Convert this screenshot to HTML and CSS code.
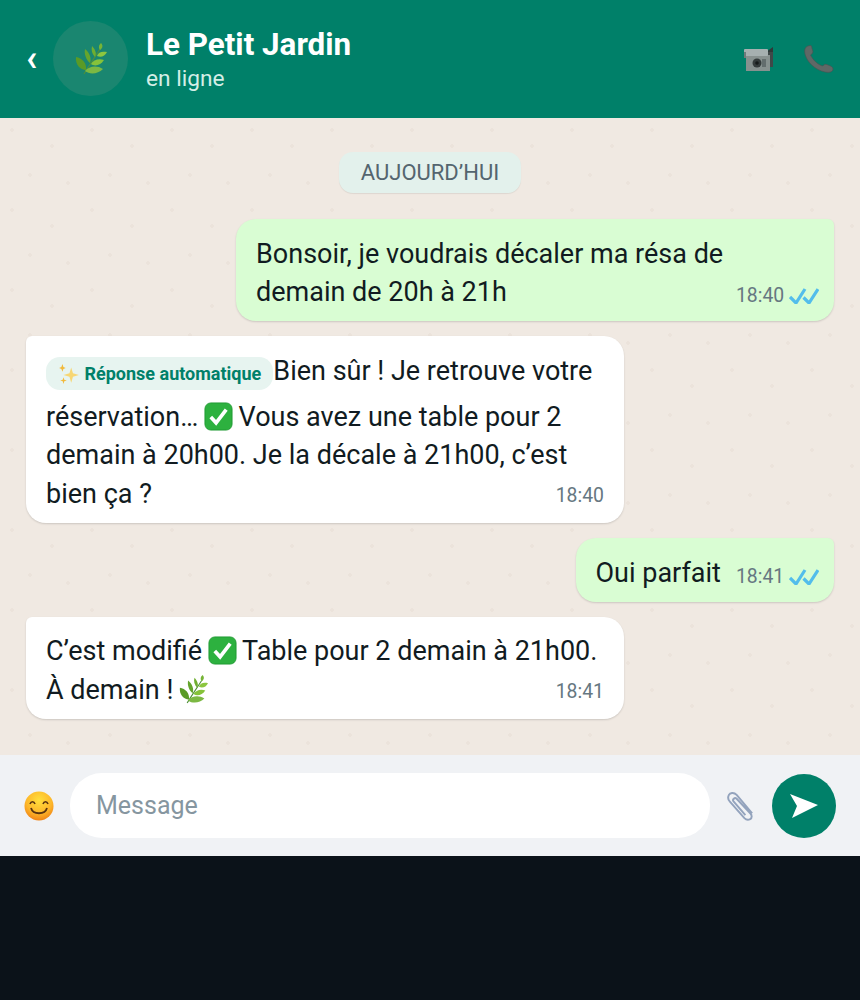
FILE: index.html
```html
<!DOCTYPE html>
<html lang="fr">
<head>
  <meta charset="UTF-8">
  <meta name="viewport" content="width=device-width, initial-scale=1.0">
  <title>Le Petit Jardin</title>
  <link rel="stylesheet" href="styles.css">
</head>
<body>
  <!-- emojis -->
  <svg class="defs" width="0" height="0">
    <symbol id="leaf" viewBox="0 0 32 32">
      <path d="M9 31C13 24 18 17 25 6" fill="none" stroke="#4f8f3a" stroke-width="1.2"/>
      <path d="M11 27C5 27 0 21 1 14c6 1 11 6 10 13z" fill="#5a9a26"/>
      <path d="M10 28c4-5 12-6 18-2-5 5-13 6-18 2z" fill="#7cb843"/>
      <path d="M15 20c-4-3-6-9-5-14 4 3 7 9 5 14z" fill="#64a52c"/>
      <path d="M16 21c2-4 8-6 13-4-3 5-9 7-13 4z" fill="#86c23a"/>
      <path d="M20 14c-3-3-4-7-3-11 3 3 5 7 3 11z" fill="#6fae30"/>
      <path d="M22 13c1-4 5-5 10-4-2 4-6 6-10 4z" fill="#8cc63f"/>
      <path d="M25 7c-2-3-1-5 1-7 2 2 2 5-1 7z" fill="#76b436"/>
    </symbol>
    <symbol id="check" viewBox="0 0 30 30">
      <rect x="1" y="1" width="28" height="28" rx="6" fill="#2db13f" stroke="#1f9a33" stroke-width="1"/>
      <path d="M7 15.500l5.500 6L23 8" fill="none" stroke="#fff" stroke-width="3.800"/>
    </symbol>
    <symbol id="ticks" viewBox="0 0 30 16">
      <path d="M1 9l6 6L16 1M14.500 9.500L20 15l9-14" fill="none" stroke="#53bdeb" stroke-width="3.200"/>
    </symbol>
  </svg>

  <div class="app">
    <!-- entete -->
    <header class="topbar">
      <span class="back">‹</span>
      <div class="avatar"><svg class="avatar-leaf"><use href="#leaf"/></svg></div>
      <div class="contact">
        <div class="contact-name">Le Petit Jardin</div>
        <div class="contact-status">en ligne</div>
      </div>
      <div class="top-icons">
        <svg class="icon-camera" viewBox="0 0 30 26">
          <path d="M22 6l7-5v8z" fill="#2f3838"/>
          <rect x="24" y="6" width="5" height="15" fill="#3f4848"/>
          <rect x="2" y="9" width="24" height="16" fill="#87918f"/>
          <rect x="0" y="3" width="24" height="7" rx="1" fill="#a6b0b0"/>
          <rect x="0" y="6" width="2" height="6" fill="#6f7a7a"/>
          <circle cx="13" cy="17" r="4.500" fill="#343b3b"/>
          <circle cx="13" cy="17" r="1.800" fill="#161a1a"/>
          <rect x="18" y="13" width="4" height="8" fill="#636d6d"/>
        </svg>
        <svg class="icon-phone" viewBox="0 0 30 28">
          <path d="M4 1C1 2 0 5 1 9c2 8 10 16 20 18 4 1 8 0 8-3 0-2-2-3-5-4-2-1-4-1-5 1-5-1-10-6-12.500-11 2-1 3-3 2-5S8 1 7 .6C6 .3 5 .6 4 1z" fill="#5f6866" stroke="#4a5251" stroke-width=".6"/>
        </svg>
      </div>
    </header>

    <!-- messages -->
    <main class="chat">
      <div class="date-pill">AUJOURD’HUI</div>

      <div class="bubble sent">
        Bonsoir, je voudrais décaler ma résa de demain de 20h à 21h
        <span class="meta">18:40 <svg class="ticks"><use href="#ticks"/></svg></span>
      </div>

      <div class="bubble received">
        <span class="auto-tag"><svg class="spark" viewBox="0 0 20 20">
            <path d="M12 4l1.600 5.400L19 11l-5.400 1.600L12 18l-1.600-5.400L5 11l5.400-1.600z" fill="#f7d774"/>
            <path d="M4 1l.9 2.600L7 4.500l-2.100.9L4 8l-.9-2.600L1 4.500l2.100-.9z" fill="#f2b93b"/>
            <path d="M5 13l.7 2.300L8 16l-2.300.7L5 19l-.7-2.300L2 16l2.300-.7z" fill="#f2b93b"/>
          </svg> Réponse automatique</span>Bien sûr ! Je retrouve votre réservation… <svg class="emoji"><use href="#check"/></svg> Vous avez une table pour 2 demain à 20h00. Je la décale à 21h00, c’est bien ça ?
        <span class="meta">18:40</span>
      </div>

      <div class="bubble sent">
        Oui parfait
        <span class="meta">18:41 <svg class="ticks"><use href="#ticks"/></svg></span>
      </div>

      <div class="bubble received">
        C’est modifié <svg class="emoji"><use href="#check"/></svg> Table pour 2 demain à 21h00.
        À demain ! <svg class="emoji"><use href="#leaf"/></svg>
        <span class="meta">18:41</span>
      </div>
    </main>

    <!-- saisie -->
    <footer class="composer">
      <svg class="smile" viewBox="0 0 30 30">
        <defs>
          <radialGradient id="face" cx="50%" cy="30%" r="75%">
            <stop offset="0" stop-color="#ffdf3c"/>
            <stop offset="0.6" stop-color="#fdb62a"/>
            <stop offset="1" stop-color="#ee7a12"/>
          </radialGradient>
        </defs>
        <circle cx="15" cy="15" r="14.500" fill="url(#face)"/>
        <path d="M6 13c1-3 4-3 5 0M19 13c1-3 4-3 5 0" fill="none" stroke="#5a3410" stroke-width="1.600"/>
        <path d="M7 17c2 7 14 7 16 0" fill="none" stroke="#5a3410" stroke-width="1.800"/>
      </svg>
      <div class="message-input">Message</div>
      <svg class="clip" viewBox="0 0 32 32">
        <path d="M27 24L11 5C8 2 4 3 3 5s-1 5 1 7l15 17c2 2 4 2 6 1s2-4 0-6L11 9c-1-1-2-1-3 0s-1 2 0 3l12 14" fill="none" stroke="#93a3bd" stroke-width="2"/>
      </svg>
      <div class="send">
        <svg class="send-arrow" viewBox="0 0 28 24"><path d="M0 0l28 11L2 24l5-12z" fill="#fff"/></svg>
      </div>
    </footer>
  </div>
</body>
</html>
```
FILE: styles.css
```css
body {
  margin: 0;
  height: 1000px;
  background-color: #0b1219;
  font-family: 'Roboto', 'Liberation Sans', sans-serif;
  color: #111b21;
}
.defs {
  position: absolute;
}
.app {
  width: 860px;
}

/* entete */
.topbar {
  height: 118px;
  background-color: #008069;
  display: flex;
  align-items: center;
  padding: 0 26px;
  box-sizing: border-box;
  color: #fff;
}
.back {
  font-size: 36px;
  font-weight: 700;
  line-height: 36px;
  width: 27px;
  margin-top: -2px;
}
.avatar {
  width: 75px;
  height: 75px;
  border-radius: 50%;
  background-color: #1a8670;
  display: flex;
  align-items: center;
  justify-content: center;
  margin-right: 18px;
  margin-top: -1px;
}
.avatar-leaf {
  width: 32px;
  height: 32px;
}
.contact {
  flex: 1;
  padding-top: 4px;
}
.contact-name {
  font-size: 31.400px;
  font-weight: 700;
  line-height: 36px;
}
.contact-status {
  font-size: 22.700px;
  line-height: 32px;
  color: #d4eee6;
}
.top-icons {
  display: flex;
  align-items: center;
  gap: 30px;
}
.icon-camera {
  width: 30px;
  height: 26px;
}
.icon-phone {
  width: 30px;
  height: 28px;
}

/* messages */
.chat {
  height: 637px;
  box-sizing: border-box;
  padding: 34px 26px 0;
  display: flex;
  flex-direction: column;
  align-items: flex-start;
  background-color: #f0e9e2;
  background-image:
    radial-gradient(circle at 12px 12px, #ebe3db 1.500px, transparent 2px),
    radial-gradient(circle at 52px 28px, #ebe3db 1.500px, transparent 2px),
    radial-gradient(circle at 30px 57px, #ebe3db 1.500px, transparent 2px),
    radial-gradient(circle at 68px 65px, #ebe3db 1.500px, transparent 2px);
  background-size: 80px 80px;
}
.date-pill {
  align-self: center;
  background-color: #e3f1ec;
  color: #54656f;
  font-size: 22px;
  line-height: 41px;
  padding: 0 22px;
  border-radius: 14px;
  box-shadow: 0 1px 1px rgba(0, 0, 0, 0.08);
  margin-bottom: 26px;
}
.bubble {
  max-width: 558px;
  padding: 15.500px 20px 10px;
  font-size: 27px;
  line-height: 38.400px;
  border-radius: 20px;
  box-shadow: 0 1px 2px rgba(0, 0, 0, 0.15);
  margin-bottom: 15px;
}
.sent {
  align-self: flex-end;
  background-color: #d9fdd3;
  border-top-right-radius: 6px;
}
.received {
  background-color: #fff;
  border-top-left-radius: 6px;
}
.meta {
  float: right;
  font-size: 19.400px;
  line-height: 24px;
  color: #667781;
  margin: 11px -5px -11px 15px;
  white-space: nowrap;
}
.received .meta {
  margin: 9px 0 -9px 15px;
}
.ticks {
  width: 30px;
  height: 16px;
  vertical-align: -2px;
}
.emoji {
  width: 29px;
  height: 29px;
  vertical-align: -5px;
  margin: 0 -1px;
}
.auto-tag {
  display: inline-block;
  background-color: #e7f4f0;
  color: #008069;
  font-size: 18px;
  font-weight: 700;
  line-height: 33px;
  padding: 0 12px;
  border-radius: 14px;
  margin: 5px 0 8px 0;
}
.spark {
  width: 22px;
  height: 22px;
  vertical-align: -5px;
}

/* saisie */
.composer {
  height: 101px;
  box-sizing: border-box;
  background-color: #f0f2f5;
  display: flex;
  align-items: center;
  padding: 0 24px;
}
.smile {
  width: 30px;
  height: 30px;
  margin-right: 16px;
}
.message-input {
  width: 640px;
  height: 65px;
  box-sizing: border-box;
  background-color: #fff;
  border-radius: 32px;
  padding: 0 26px;
  font-size: 25px;
  line-height: 65px;
  color: #8696a0;
  margin-right: 16px;
}
.clip {
  width: 31px;
  height: 31px;
  margin-right: 15px;
}
.send {
  width: 64px;
  height: 64px;
  border-radius: 50%;
  background-color: #008069;
  display: flex;
  align-items: center;
  justify-content: center;
}
.send-arrow {
  width: 28px;
  height: 24px;
}
```
